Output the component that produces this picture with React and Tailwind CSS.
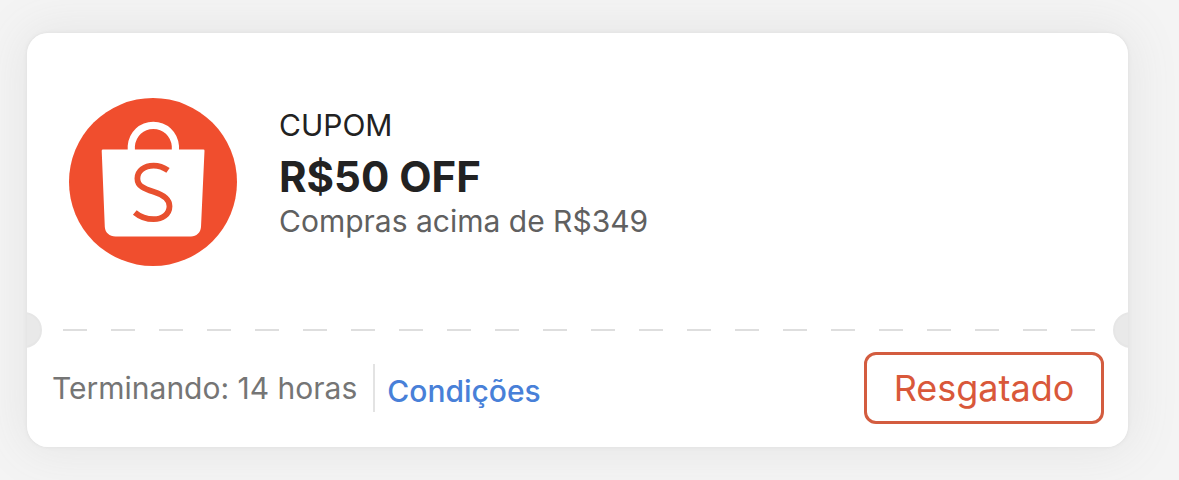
function StoreLogo() {
  return (
    <svg className="size-42 shrink-0" viewBox="0 0 168 168" fill="none" aria-hidden="true">
      <circle cx="84" cy="84" r="84" fill="#f04e2e" />
      <path d="M62.3 53V48C63.5 36 72.5 27.4 84.3 27.4S105.2 36 106.4 48V53" stroke="#fff" strokeWidth="7.2" />
      <path
        d="M34 51.5H134.4Q135.6 51.5 135.5 52.8L132 129C131.5 134.8 127.5 138.4 122 138.4H46.5C40.5 138.4 36.2 134.8 35.8 129L32.7 52.8Q32.7 51.5 34 51.5Z"
        fill="#fff"
      />
      <path
        d="M99 72.4C94.5 69.3 90 67.6 84.7 67.6C75 67.6 68.4 73 68.4 80.4C68.4 88.2 75.5 91 84.6 93.8C94.5 96.9 100.5 100.7 100.5 108.2C100.5 116.2 93.3 121.2 84.6 121.2C77.4 121.2 71.2 118.9 65.8 114.4"
        stroke="#e8502f"
        strokeWidth="5.8"
      />
    </svg>
  );
}

function Perforation() {
  return (
    <div className="relative flex h-9 items-center pr-8 pl-9">
      <span className="absolute top-0 -left-[21px] size-9 rounded-full border-2 border-[#e6e6e6] bg-[#e9e9e9]" />
      <div className="h-0.5 w-full bg-[repeating-linear-gradient(90deg,#dedede_0_24px,transparent_24px_48px)]" />
      <span className="absolute top-0 -right-[21px] size-9 rounded-full border-2 border-[#e6e6e6] bg-[#e9e9e9]" />
    </div>
  );
}

export default function App() {
  return (
    <main className="min-h-screen bg-[#f4f4f4] pt-[33px] pr-[51px] pb-[33px] pl-[27px] font-['Inter','Liberation_Sans',sans-serif]">
      <article className="rounded-[21px] shadow-[0_0_3px_1px_#e3e3e3,0_0_48px_6px_#e6e6e6]">
        <div className="overflow-hidden rounded-[21px] bg-white">
          <div className="flex items-start gap-[42px] px-[42px] pt-[65px] pb-[46px]">
            <StoreLogo />
            <div className="pt-2">
              <p className="text-[30px] leading-[38px] text-[#222]">CUPOM</p>
              <h1 className="pt-2 text-[42px] leading-[50px] font-bold text-[#222]">R$50 OFF</h1>
              <p className="text-[30px] leading-[38px] text-[#606060]">Compras acima de R$349</p>
            </div>
          </div>
          <Perforation />
          <div className="flex items-start justify-between pt-1 pr-6 pb-[23px] pl-[25px]">
            <div className="flex h-[72px] items-center">
              <p className="pr-4 text-[30px] leading-[38px] text-[#757575]">Terminando: 14 horas</p>
              <span className="h-12 w-0.5 bg-[#e3e3e3]" />
              <a href="#condicoes" className="pt-1.5 pl-3 text-[30px] leading-[38px] font-medium text-[#4880d8]">
                Condições
              </a>
            </div>
            <button
              type="button"
              className="h-[72px] w-60 rounded-xl border-3 border-[#d35c3f] text-[36px] leading-[48px] text-[#d9583a]"
            >
              Resgatado
            </button>
          </div>
        </div>
      </article>
    </main>
  );
}
